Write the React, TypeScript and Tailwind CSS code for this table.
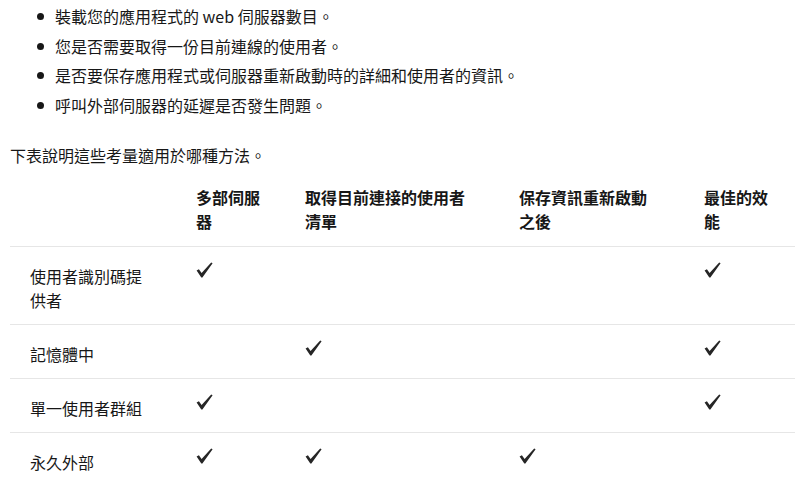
const font = { fontFamily: '"Noto Sans CJK TC", "Noto Sans", sans-serif' }

const bullets = [
  '裝載您的應用程式的 web 伺服器數目。',
  '您是否需要取得一份目前連線的使用者。',
  '是否要保存應用程式或伺服器重新啟動時的詳細和使用者的資訊。',
  '呼叫外部伺服器的延遲是否發生問題。',
]

const headers = [
  { label: '多部伺服器', w: 'w-[72px]' },
  { label: '取得目前連接的使用者清單', w: 'w-[170px]' },
  { label: '保存資訊重新啟動之後', w: 'w-[136px]' },
  { label: '最佳的效能', w: 'w-[72px]' },
]

const rows: { label: string; checks: boolean[] }[] = [
  { label: '使用者識別碼提供者', checks: [true, false, false, true] },
  { label: '記憶體中', checks: [false, true, false, true] },
  { label: '單一使用者群組', checks: [true, false, false, true] },
  { label: '永久外部', checks: [true, true, true, false] },
]

function Check() {
  return (
    <svg width="17" height="16" viewBox="0 0 17 16" className="mt-[-1px]">
      <path d="M0.6 8.6 L2.9 7.2 L5.6 10.9 L15.2 0.4 L16.6 1.3 L6.4 15.4 L5.3 15.6 Z" fill="#262626" />
    </svg>
  )
}

export default function App() {
  return (
    <div className="w-[800px] h-[485px] overflow-hidden bg-white text-[16px] text-[#171717]" style={font}>
      <ul className="pt-[2px] pl-[36px]">
        {bullets.map((b) => (
          <li key={b} className="flex items-center leading-[29.5px]">
            <span className="w-[7px] h-[7px] rounded-full bg-[#171717] ml-[1px] mr-[11px] shrink-0" />
            <span>{b}</span>
          </li>
        ))}
      </ul>

      <p className="mt-[23px] ml-[10px] leading-6">下表說明這些考量適用於哪種方法。</p>

      <div className="ml-[10px] mr-[5px] mt-[8px]">
        <div className="grid grid-cols-[176px_109px_214px_185px_1fr] border-b border-[#e6e6e6]">
          <div />
          {headers.map((h) => (
            <div key={h.label} className="pl-[10px] pt-[10px] pb-[13px] leading-6 font-bold">
              <div className={h.w}>{h.label}</div>
            </div>
          ))}
        </div>
        {rows.map((r) => (
          <div key={r.label} className="grid grid-cols-[176px_109px_214px_185px_1fr] border-b border-[#e6e6e6]">
            <div className="pl-5 pt-[17px] pb-[12px] leading-6">
              <div className="w-[120px]">{r.label}</div>
            </div>
            {r.checks.map((c, i) => (
              <div key={i} className="pl-[10px] pt-[16px]">
                {c && <Check />}
              </div>
            ))}
          </div>
        ))}
      </div>
    </div>
  )
}
